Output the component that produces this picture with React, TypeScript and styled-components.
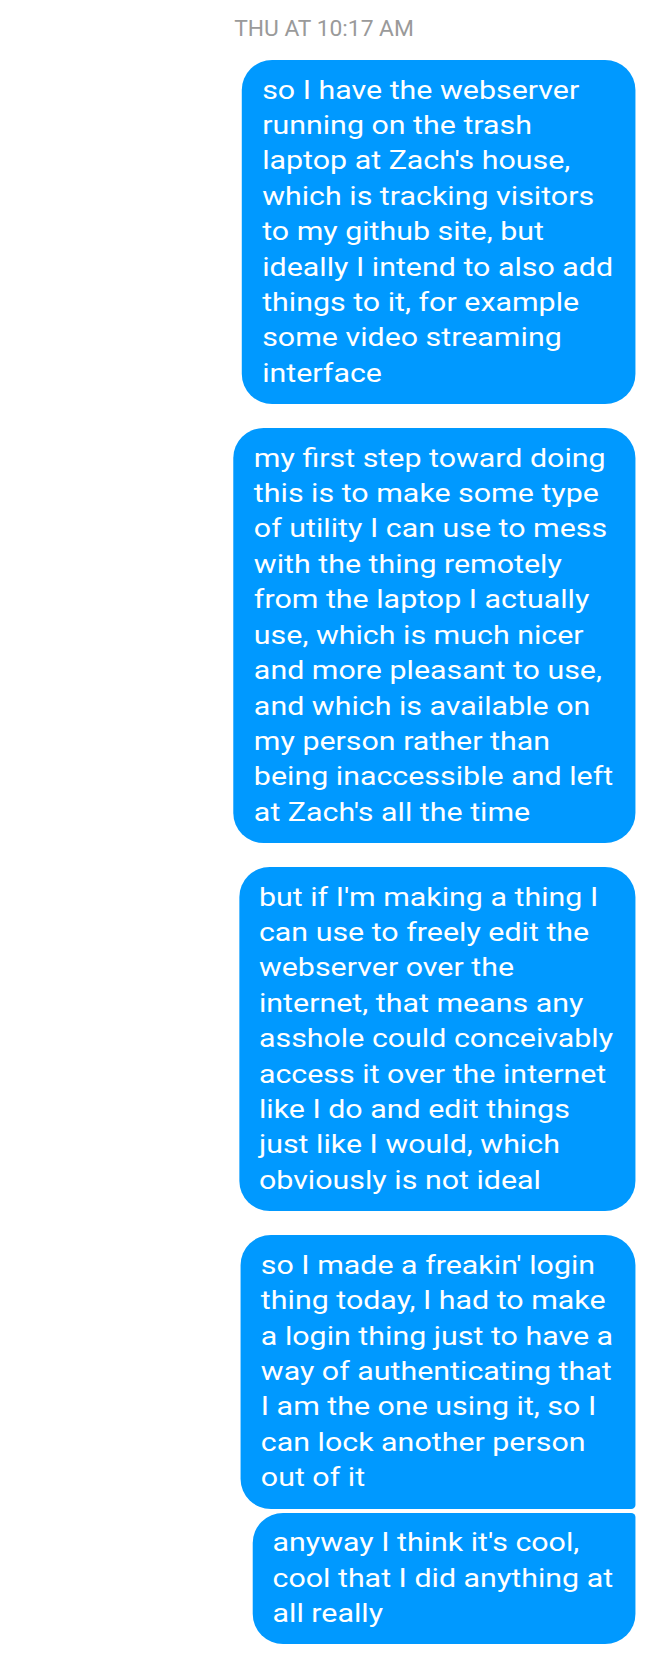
import React from "react";
import styled, { createGlobalStyle } from "styled-components";

const STRETCH = 1.215;

const GlobalStyle = createGlobalStyle`
  html, body {
    margin: 0;
    padding: 0;
    background: #ffffff;
  }
  body {
    font-family: Roboto, "Noto Sans", "Liberation Sans", sans-serif;
    -webkit-font-smoothing: antialiased;
  }
`;

const Page = styled.div`
  width: 648px;
  padding: 16px 0 17px;
  box-sizing: border-box;
  overflow: hidden;
`;

const Timestamp = styled.div`
  text-align: center;
  font-family: Roboto, "Liberation Sans", sans-serif;
  font-size: 22.8px;
  line-height: 26px;
  color: #9a9a9a;
  margin-bottom: 18px;
`;

const Thread = styled.div`
  width: ${648 / STRETCH}px;
  box-sizing: border-box;
  padding-right: ${13 / STRETCH}px;
  display: flex;
  flex-direction: column;
  align-items: flex-end;
  transform: scaleX(${STRETCH});
  transform-origin: 0 0;
`;

const Bubble = styled.div<{ $groupedTop?: boolean; $groupedBottom?: boolean; $first?: boolean }>`
  background: #0099ff;
  color: #ffffff;
  font-family: Roboto, "Liberation Sans", sans-serif;
  font-size: 25px;
  line-height: 35.4px;
  padding: 12.5px 18px 13px 16.5px;
  margin-top: ${(p) => (p.$first ? 0 : p.$groupedTop ? 4 : 24)}px;
  border-radius: ${(p) =>
    `25px ${p.$groupedTop ? 3.5 : 25}px ${p.$groupedBottom ? 3.5 : 25}px 25px / 30px ${
      p.$groupedTop ? 4 : 30
    }px ${p.$groupedBottom ? 4 : 30}px 30px`};
`;

const Line = styled.span`
  display: block;
  white-space: nowrap;
`;

type Msg = { lines: string[]; groupedTop?: boolean; groupedBottom?: boolean };

const messages: Msg[] = [
  {
    lines: [
      "so I have the webserver",
      "running on the trash",
      "laptop at Zach's house,",
      "which is tracking visitors",
      "to my github site, but",
      "ideally I intend to also add",
      "things to it, for example",
      "some video streaming",
      "interface",
    ],
  },
  {
    lines: [
      "my first step toward doing",
      "this is to make some type",
      "of utility I can use to mess",
      "with the thing remotely",
      "from the laptop I actually",
      "use, which is much nicer",
      "and more pleasant to use,",
      "and which is available on",
      "my person rather than",
      "being inaccessible and left",
      "at Zach's all the time",
    ],
  },
  {
    lines: [
      "but if I'm making a thing I",
      "can use to freely edit the",
      "webserver over the",
      "internet, that means any",
      "asshole could conceivably",
      "access it over the internet",
      "like I do and edit things",
      "just like I would, which",
      "obviously is not ideal",
    ],
  },
  {
    lines: [
      "so I made a freakin' login",
      "thing today, I had to make",
      "a login thing just to have a",
      "way of authenticating that",
      "I am the one using it, so I",
      "can lock another person",
      "out of it",
    ],
    groupedBottom: true,
  },
  {
    lines: ["anyway I think it's cool,", "cool that I did anything at", "all really"],
    groupedTop: true,
  },
];

export default function App() {
  return (
    <>
      <GlobalStyle />
      <Page>
        <Timestamp>THU AT 10:17 AM</Timestamp>
        <Thread>
          {messages.map((m, i) => (
            <Bubble
              key={i}
              $first={i === 0}
              $groupedTop={m.groupedTop}
              $groupedBottom={m.groupedBottom}
            >
              {m.lines.map((l, j) => (
                <Line key={j}>{l}</Line>
              ))}
            </Bubble>
          ))}
        </Thread>
      </Page>
    </>
  );
}
